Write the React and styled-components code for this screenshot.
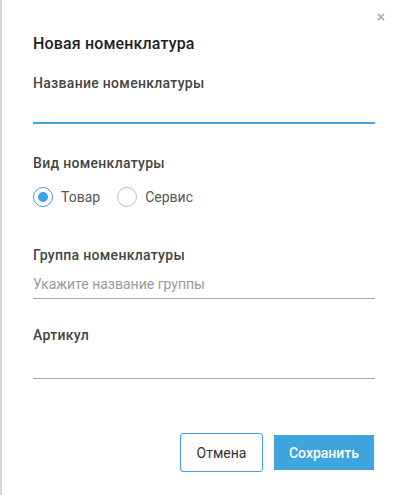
import React, { useState } from "react";
import styled, { createGlobalStyle } from "styled-components";

const Global = createGlobalStyle`
  html, body { margin: 0; padding: 0; background: #fff; }
  body { font-family: Roboto, "Noto Sans", Arial, sans-serif; }
  * { box-sizing: border-box; }
`;

const Dialog = styled.div`
  position: relative;
  width: 396px;
  height: 495px;
  border-left: 2px solid #d6d6d6;
  padding: 34px 21px 0 31px;
  background: #fff;
  display: flex;
  flex-direction: column;
`;

const Close = styled.button`
  position: absolute;
  top: 12px;
  right: 10px;
  width: 10px;
  height: 10px;
  padding: 0;
  border: 0;
  background: none;
  display: flex;
  align-items: center;
  justify-content: center;
  cursor: pointer;
`;

const Title = styled.h1`
  margin: 0;
  font-size: 16px;
  line-height: 20px;
  font-weight: 500;
  letter-spacing: 0.15px;
  color: #1f1f1f;
`;

const Label = styled.div`
  margin-top: ${(p) => p.$gap}px;
  font-size: 14px;
  line-height: 18px;
  font-weight: 500;
  letter-spacing: 0.3px;
  color: #454545;
`;

const Input = styled.input`
  display: block;
  width: 100%;
  height: ${(p) => p.$h}px;
  margin-top: ${(p) => p.$mt || 0}px;
  border: 0;
  border-bottom: ${(p) => (p.$active ? "2px solid #3aa3e0" : "1px solid #a9a9a9")};
  padding: 0;
  outline: none;
  font-family: inherit;
  font-size: 14px;
  color: #333;
  background: transparent;
  &::placeholder { color: #9a9a9a; }
`;

const RadioRow = styled.div`
  display: flex;
  align-items: center;
  gap: 17px;
  margin-top: 15px;
  height: 20px;
`;

const RadioItem = styled.label`
  display: flex;
  align-items: center;
  gap: 8px;
  font-size: 14px;
  color: #555;
  cursor: pointer;
`;

const Circle = styled.span`
  width: 20px;
  height: 20px;
  border-radius: 50%;
  border: 1.5px solid ${(p) => (p.$on ? "#3aa3e0" : "#bdbdbd")};
  display: flex;
  align-items: center;
  justify-content: center;
  &::after {
    content: "";
    width: 10px;
    height: 10px;
    border-radius: 50%;
    background: ${(p) => (p.$on ? "#3aa3e0" : "transparent")};
  }
`;

const Footer = styled.div`
  display: flex;
  justify-content: flex-end;
  align-items: center;
  gap: 11px;
  margin-top: 54px;
  padding-right: 1px;
`;

const Button = styled.button`
  font-family: inherit;
  font-size: 14px;
  cursor: pointer;
  ${(p) =>
    p.$primary
      ? `
    width: 100px; height: 35px; border: 0; border-radius: 0;
    background: #3ea5df; color: #fff; font-weight: 500;
  `
      : `
    width: 83px; height: 39px; border: 1px solid #3aa3e0; border-radius: 3px;
    background: #fff; color: #333;
  `}
`;

export default function App() {
  const [kind, setKind] = useState("goods");
  return (
    <>
      <Global />
      <Dialog>
        <Close aria-label="close">
          <svg width="8" height="8" viewBox="0 0 8 8">
            <path d="M1 1L7 7M7 1L1 7" stroke="#b3b3b3" strokeWidth="1.8" />
          </svg>
        </Close>
        <Title>Новая номенклатура</Title>
        <Label $gap={20}>Название номенклатуры</Label>
        <Input $h={32} $active />
        <Label $gap={30}>Вид номенклатуры</Label>
        <RadioRow>
          <RadioItem onClick={() => setKind("goods")}>
            <Circle $on={kind === "goods"} />
            Товар
          </RadioItem>
          <RadioItem onClick={() => setKind("service")}>
            <Circle $on={kind === "service"} />
            Сервис
          </RadioItem>
        </RadioRow>
        <Label $gap={39}>Группа номенклатуры</Label>
        <Input $h={30} $mt={5} placeholder="Укажите название группы" />
        <Label $gap={27}>Артикул</Label>
        <Input $h={35} />
        <Footer>
          <Button>Отмена</Button>
          <Button $primary>Сохранить</Button>
        </Footer>
      </Dialog>
    </>
  );
}
